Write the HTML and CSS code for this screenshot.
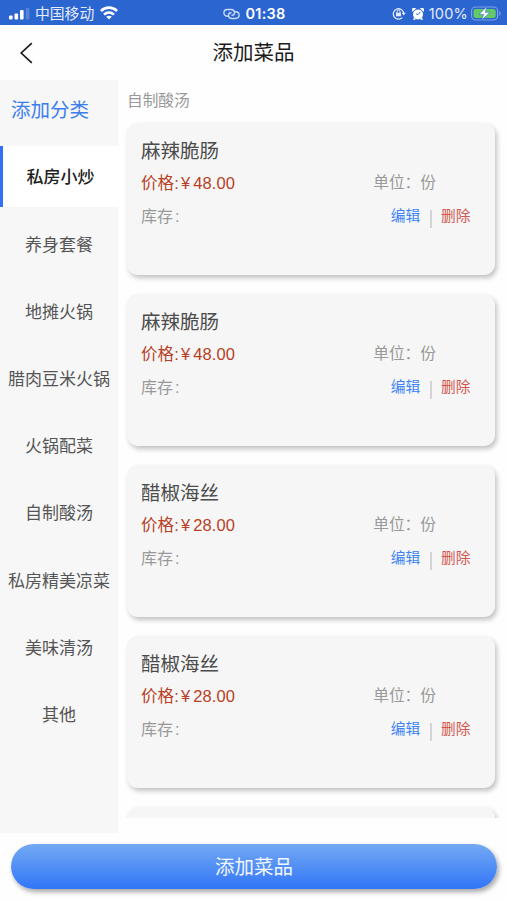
FILE: index.html
```
<!DOCTYPE html>
<html lang="zh-CN">
<head>
	<meta charset="UTF-8">
	<meta name="viewport" content="width=device-width, initial-scale=1.0">
	<title>添加菜品</title>
	<link rel="stylesheet" href="styles.css">
</head>
<body>
	<!-- Phone status bar -->
	<div class="status-bar">
		<div class="status-left">
			<svg class="signal" width="21" height="12" viewBox="0 0 21 12" fill="#fff">
				<rect x="0" y="7.5" width="3.6" height="4" rx="1"/>
				<rect x="5.5" y="5.5" width="3.6" height="6" rx="1"/>
				<rect x="11" y="2" width="3.6" height="9.5" rx="1"/>
				<rect x="16.8" y="0" width="3.6" height="11.5" rx="1" opacity=".2"/>
			</svg>
			<span class="carrier">中国移动</span>
			<svg class="wifi" width="18" height="14" viewBox="0 0 18 14" fill="none" stroke="#fff" stroke-width="2.6">
				<path d="M.9 5C5.6.5 12.4.5 17.1 5"/>
				<path d="M4 8.6c2.9-2.7 7.1-2.7 10 0"/>
				<path d="M9 13.4 6.2 10.8c1.6-1.4 4-1.4 5.6 0z" fill="#fff" stroke="none"/>
			</svg>
		</div>
		<div class="status-center">
			<svg class="link" width="17" height="12" viewBox="0 0 17 12" fill="none" stroke="#c9daf8" stroke-width="1.4" stroke-linecap="round">
				<path d="M4.6 8.3C2.300 8.300.9 6.700.9 4.900S2.300 1.500 4.400 1.500h3.400c2.300 0 3.700 1.500 3.700 3.200 0 1.500-1 2.600-2.500 2.600"/>
				<path d="M12.400 3.700c2.300 0 3.700 1.600 3.700 3.400s-1.400 3.400-3.500 3.400H9.200c-2.300 0-3.700-1.500-3.700-3.200 0-1.500 1-2.600 2.500-2.600"/>
			</svg>
			<span class="time">01:38</span>
		</div>
		<div class="status-right">
			<svg class="lock" width="14" height="13" viewBox="0 0 14 13" fill="none" stroke="#e4ecfb" stroke-width="1.3">
				<path d="M10.300 10.600A5.200 5.200 0 1 1 11.700 6.200"/>
				<path d="M9.700 5.800h3.900l-1.900 2.600z" fill="#e4ecfb" stroke="none"/>
				<rect x="4" y="5.700" width="5" height="3.600" fill="#e4ecfb" stroke="none"/>
				<path d="M5 6V4.700a1.500 1.500 0 0 1 3 0V6" stroke-width="1"/>
			</svg>
			<svg class="alarm" width="12" height="12" viewBox="0 0 12 12">
				<circle cx="6" cy="6.400" r="5" fill="#fff"/>
				<path d="M.3 3.700A2.300 2.300 0 0 1 4 .6zM11.700 3.700A2.300 2.300 0 0 0 8 .6zM2.200 9.200l-1.300 2.500h2.900zM9.800 9.200l1.300 2.500H8.200z" fill="#fff"/>
				<path d="M8.300 3.900 6.200 6.500 4 5.900" fill="none" stroke="#2b65cf" stroke-width=".9"/>
			</svg>
			<span class="percent">100%</span>
			<svg class="battery" width="31" height="15" viewBox="0 0 31 15">
				<rect x=".6" y="1" width="26" height="13" rx="4" fill="none" stroke="#7fa4e4" stroke-width="1.1"/>
				<rect x="2.5" y="3" width="22.2" height="9" rx="2.2" fill="#62cb67"/>
				<path d="M28.3 5.2c1.8.7 1.8 3.9 0 4.6z" fill="#7fa4e4"/>
				<path d="M16 .6 7.9 8.4h4.7L10.4 14.6 19 6.3h-4.7z" fill="#fff" stroke="#2b65cf" stroke-width=".6"/>
			</svg>
		</div>
	</div>

	<header class="nav-bar">
		<svg class="back" width="14" height="22" viewBox="0 0 14 22" fill="none" stroke="#1b1b1b" stroke-width="1.7">
			<path d="M12.8 1.2 2.2 11l10.6 9.8"/>
		</svg>
		<h1 class="title">添加菜品</h1>
	</header>

	<main class="main">
		<nav class="sidebar">
			<a class="add-category">添加分类</a>
			<a class="category active">私房小炒</a>
			<a class="category">养身套餐</a>
			<a class="category">地摊火锅</a>
			<a class="category">腊肉豆米火锅</a>
			<a class="category">火锅配菜</a>
			<a class="category">自制酸汤</a>
			<a class="category">私房精美凉菜</a>
			<a class="category">美味清汤</a>
			<a class="category">其他</a>
		</nav>

		<section class="dishes">
			<h2 class="group-name">自制酸汤</h2>
			<div class="card">
				<div class="name">麻辣脆肠</div>
				<div class="row"><span class="price">价格:<i class="yen">¥</i>48.00</span><span class="unit">单位：<b>份</b></span></div>
				<div class="row"><span class="stock">库存<i>:</i></span><span class="actions"><a class="edit">编辑</a><span class="line"></span><a class="delete">删除</a></span></div>
			</div>
			<div class="card">
				<div class="name">麻辣脆肠</div>
				<div class="row"><span class="price">价格:<i class="yen">¥</i>48.00</span><span class="unit">单位：<b>份</b></span></div>
				<div class="row"><span class="stock">库存<i>:</i></span><span class="actions"><a class="edit">编辑</a><span class="line"></span><a class="delete">删除</a></span></div>
			</div>
			<div class="card">
				<div class="name">醋椒海丝</div>
				<div class="row"><span class="price">价格:<i class="yen">¥</i>28.00</span><span class="unit">单位：<b>份</b></span></div>
				<div class="row"><span class="stock">库存<i>:</i></span><span class="actions"><a class="edit">编辑</a><span class="line"></span><a class="delete">删除</a></span></div>
			</div>
			<div class="card">
				<div class="name">醋椒海丝</div>
				<div class="row"><span class="price">价格:<i class="yen">¥</i>28.00</span><span class="unit">单位：<b>份</b></span></div>
				<div class="row"><span class="stock">库存<i>:</i></span><span class="actions"><a class="edit">编辑</a><span class="line"></span><a class="delete">删除</a></span></div>
			</div>
			<!-- next dish, cut off by the scroll area -->
			<div class="card"></div>
		</section>
	</main>

	<footer class="footer">
		<button class="add-btn">添加菜品</button>
	</footer>
</body>
</html>
```
FILE: styles.css
```
* {
	box-sizing: border-box;
}

body {
	margin: 0;
	height: 900px;
	overflow: hidden;
	display: flex;
	flex-direction: column;
	background-color: #fefefe;
	font-family: "Liberation Sans", "Noto Sans CJK SC", sans-serif;
}

i, b {
	font-style: normal;
	font-weight: normal;
}

svg {
	display: block;
	flex: none;
}

/* Status bar */
.status-bar {
	height: 25px;
	flex: none;
	display: grid;
	grid-template-columns: 1fr auto 1fr;
	align-items: center;
	padding: 2px 5px 0 9px;
	background-color: #2b65cf;
	color: #fff;
}

.status-left, .status-center, .status-right {
	display: flex;
	align-items: center;
	height: 23px;
}

.carrier {
	margin: 2px 6px 0 5px;
	font-size: 14.8px;
	line-height: 23px;
	color: #e4ecfb;
}

.wifi {
	margin-top: -2px;
}

.link {
	margin-left: -3px;
}

.time {
	margin-left: 6px;
	font-family: Inter, sans-serif;
	font-size: 14.5px;
	font-weight: 600;
	letter-spacing: 0.2px;
}

.status-right {
	justify-content: flex-end;
}

.alarm {
	margin: 0 5px 0 6px;
}

.percent {
	font-family: Inter, sans-serif;
	font-size: 14.5px;
	letter-spacing: 0.2px;
	color: #e4ecfb;
	margin-right: 3px;
}

.battery {
	margin-top: -1px;
}

/* Title bar */
.nav-bar {
	height: 55px;
	flex: none;
	display: grid;
	grid-template-columns: 1fr auto 1fr;
	align-items: center;
	padding: 0 19px;
}

.title {
	margin: 0;
	font-size: 20.5px;
	font-weight: 400;
	line-height: 30px;
	color: #1b1b1b;
}

/* Two columns */
.main {
	height: 753px;
	flex: none;
	display: flex;
	align-items: flex-start;
}

.sidebar {
	width: 118px;
	height: 753px;
	flex: none;
	display: flex;
	flex-direction: column;
	gap: 6.2px;
	background-color: #f7f7f7;
}

.add-category {
	height: 60.3px;
	padding-left: 11px;
	font-size: 19.5px;
	line-height: 61px;
	color: #3c7df0;
}

.category {
	height: 61px;
	text-align: center;
	font-size: 17px;
	line-height: 63.5px;
	color: #555;
	white-space: nowrap;
}

.category.active {
	border-left: 3.5px solid #346ff5;
	background-color: #fff;
	color: #222;
	font-weight: 500;
}

.dishes {
	flex: 1;
	height: 738px;
	overflow: hidden;
	padding: 10px 12px 0 9px;
}

.group-name {
	margin: 0 0 11px;
	font-size: 15.7px;
	font-weight: 400;
	line-height: 22px;
	color: #999;
}

.card {
	height: 152px;
	margin-bottom: 19px;
	padding: 13px 14px;
	border-radius: 11px;
	background-color: #f6f6f6;
	box-shadow: 2px 3px 5px rgba(0, 0, 0, 0.24);
}

.name {
	font-size: 19.5px;
	line-height: 31px;
	height: 30px;
	color: #4c4c4c;
}

.row {
	display: flex;
	justify-content: space-between;
	height: 34px;
	font-size: 16px;
	line-height: 34px;
}

.price {
	color: #b83f25;
	font-size: 16.5px;
	letter-spacing: 0.1px;
}

.yen {
	margin: 0 3px 0 2px;
}

.unit {
	margin-right: 45px;
	font-size: 15.7px;
	color: #999;
}

.stock {
	font-size: 16px;
	color: #999;
}

.stock i {
	margin-left: 2px;
}

.actions {
	display: flex;
	margin-right: 10.5px;
	font-size: 14.7px;
	line-height: 33px;
}

.edit {
	color: #3c83f6;
}

.line {
	width: 1.5px;
	height: 18px;
	margin: 10px 9.5px 0 10px;
	background-color: #d4d4d4;
}

.delete {
	color: #d2564f;
}

/* Bottom button */
.footer {
	padding: 11px 10px 0 11px;
}

.add-btn {
	display: block;
	width: 100%;
	height: 45px;
	padding: 0;
	border: none;
	border-radius: 23px;
	background: linear-gradient(#73a9f2, #3175f8);
	box-shadow: 2px 3px 5px rgba(0, 0, 0, 0.35);
	color: #f3f7ff;
	font-family: inherit;
	font-size: 19.5px;
	line-height: 44px;
}
```
